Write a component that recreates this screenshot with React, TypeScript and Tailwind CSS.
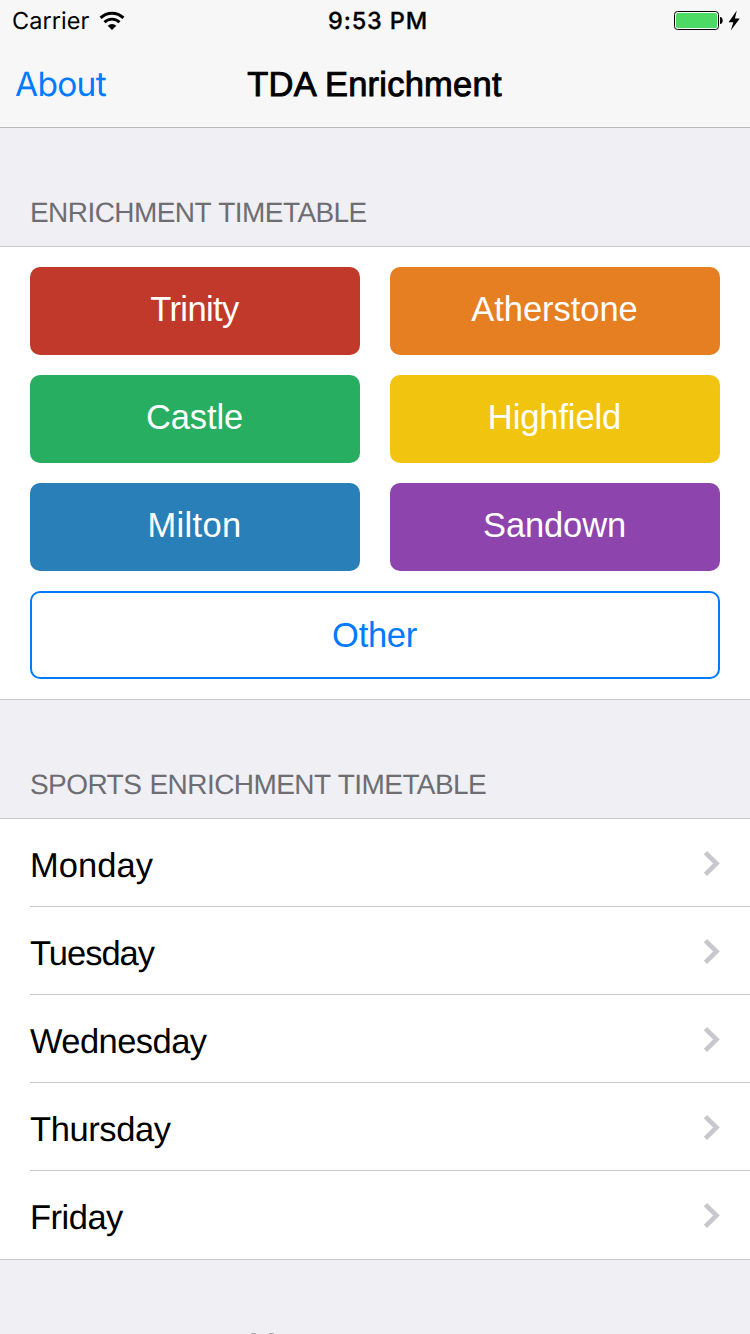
type House = { name: string; color: string; tracking: string }

const houses: House[] = [
  { name: 'Trinity', color: 'bg-[#c0392b]', tracking: 'tracking-[-0.6px]' },
  { name: 'Atherstone', color: 'bg-[#e67e22]', tracking: 'tracking-[-0.05px]' },
  { name: 'Castle', color: 'bg-[#27ae60]', tracking: 'tracking-[-0.15px]' },
  { name: 'Highfield', color: 'bg-[#f1c40f]', tracking: 'tracking-[-0.1px]' },
  { name: 'Milton', color: 'bg-[#2980b9]', tracking: 'tracking-[0.3px]' },
  { name: 'Sandown', color: 'bg-[#8e44ad]', tracking: 'tracking-[-0.13px]' },
]

const days = [
  { name: 'Monday', tracking: 'tracking-[0.05px]' },
  { name: 'Tuesday', tracking: 'tracking-[-1px]' },
  { name: 'Wednesday', tracking: 'tracking-[-0.57px]' },
  { name: 'Thursday', tracking: 'tracking-[-0.4px]' },
  { name: 'Friday', tracking: 'tracking-[-0.5px]' },
]

function WifiIcon() {
  return (
    <svg width="26" height="20" viewBox="0 0 26 20" fill="none" stroke="#000">
      <path d="M1.6 6.9 A16.2 16.2 0 0 1 24.4 6.9" strokeWidth="3" />
      <path d="M5.5 11.3 A10.4 10.4 0 0 1 20.5 11.3" strokeWidth="2.8" />
      <path d="M8.7 14.7 A6 6 0 0 1 17.3 14.7 L13 19 Z" fill="#000" stroke="none" />
    </svg>
  )
}

function BatteryIcon() {
  return (
    <svg width="68" height="22" viewBox="0 0 68 22">
      <rect x="0.5" y="1.5" width="44" height="18" rx="3" fill="#fff" stroke="#000" />
      <rect x="2" y="3" width="41" height="15" rx="1.5" fill="#4cd964" />
      <path d="M46 7 Q48.7 7.4 48.7 10.5 Q48.7 13.6 46 14 Z" />
      <path d="M62.8 0.5 L54.6 12.2 H59.4 L56.8 20.5 L65.8 8.6 H60.9 Z" />
    </svg>
  )
}

function Chevron() {
  return (
    <svg width="18" height="28" viewBox="0 0 18 28" fill="none" stroke="#c7c7cc" strokeWidth="4.6">
      <path d="M3.4 2.7 L14.5 13.5 L3.4 24.3" />
    </svg>
  )
}

function SectionHeader({ title }: { title: string }) {
  return (
    <h2 className="flex h-[119px] items-end border-b border-[#c8c7cc] px-[30px] pb-[17px] text-[28px] leading-8 tracking-[-0.56px] whitespace-nowrap text-[#6d6d72] [word-spacing:1px]">
      {title}
    </h2>
  )
}

export default function App() {
  return (
    <div className="flex h-[1334px] w-[750px] flex-col overflow-hidden bg-[#efeff4] font-['Liberation_Sans',Arial,sans-serif] text-[34.5px] leading-10 [text-rendering:geometricPrecision]">
      <header className="h-32 shrink-0 border-b border-[#b9b9bb] bg-[#f7f7f7] text-black">
        <div className="grid h-10 grid-cols-3 items-center pt-px font-['Inter',sans-serif] text-[23.5px]">
          <div className="flex items-center gap-[10px] pl-3">
            <span className="tracking-[0.04px]">Carrier</span>
            <WifiIcon />
          </div>
          <span className="pl-[6px] text-center font-medium tracking-[0.85px] [-webkit-text-stroke:0.3px_#000]">9:53 PM</span>
          <div className="flex justify-end pr-2">
            <BatteryIcon />
          </div>
        </div>
        <nav className="grid h-[87px] grid-cols-[1fr_auto_1fr] items-center pt-0.5">
          <a className="pl-[15px] font-['Inter',sans-serif] text-[33.5px] tracking-[-0.7px] text-[#007aff]">About</a>
          <h1 className="pr-px tracking-[0.24px] [-webkit-text-stroke:0.9px_#000]">TDA Enrichment</h1>
          <span />
        </nav>
      </header>

      <section className="shrink-0">
        <SectionHeader title="ENRICHMENT TIMETABLE" />
        <div className="flex flex-col gap-5 border-b border-[#c8c7cc] bg-white px-[30px] py-5">
          <div className="grid grid-cols-2 gap-x-[30px] gap-y-5">
            {houses.map((h) => (
              <button
                key={h.name}
                className={`flex h-[88px] items-center justify-center rounded-[10px] pr-px pb-1 text-white ${h.color} ${h.tracking}`}
              >
                {h.name}
              </button>
            ))}
          </div>
          <button className="h-[88px] rounded-[10px] border-2 border-[#007aff] pr-px tracking-[-0.3px] text-[#007aff]">
            Other
          </button>
        </div>
      </section>

      <section className="shrink-0">
        <SectionHeader title="SPORTS ENRICHMENT TIMETABLE" />
        <ul className="border-b border-[#c8c7cc] bg-white pl-[30px] text-black">
          {days.map((d) => (
            <li
              key={d.name}
              className="flex h-[88px] items-center justify-between border-b border-[#c8c7cc] pr-[30px] last:border-b-0"
            >
              <span className={`pt-1.5 ${d.tracking}`}>{d.name}</span>
              <span className="pt-0.5">
                <Chevron />
              </span>
            </li>
          ))}
        </ul>
      </section>

      <footer className="flex flex-1 items-end gap-[13px] pl-[251px]">
        <span className="h-px w-[5px] rounded-t-full bg-[#a5a5a9]" />
        <span className="h-px w-[5px] rounded-t-full bg-[#a5a5a9]" />
      </footer>
    </div>
  )
}
